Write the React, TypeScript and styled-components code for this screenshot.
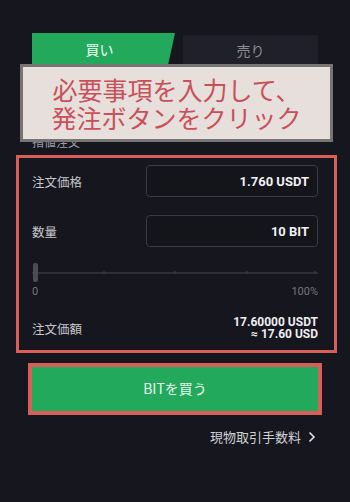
import React from "react";
import styled, { createGlobalStyle } from "styled-components";

const Global = createGlobalStyle`
  html, body { margin: 0; padding: 0; background: #16161e; }
  body { font-family: "Noto Sans CJK JP", "Noto Sans", sans-serif; }
`;

const Page = styled.div`
  position: relative;
  width: 350px;
  height: 502px;
  box-sizing: border-box;
  padding: 33px 32px 0;
  background: #16161e;
  overflow: hidden;
`;

const Tabs = styled.div`
  display: flex;
  gap: 8px;
  height: 32px;
`;

const Tab = styled.div<{ $active?: boolean }>`
  box-sizing: border-box;
  flex: ${(p) => (p.$active ? "0 0 143px" : "1")};
  display: flex;
  align-items: center;
  justify-content: center;
  font-size: 14px;
  color: ${(p) => (p.$active ? "#f2fbf5" : "#8a8b94")};
  background: ${(p) => (p.$active ? "#22a95b" : "#1f2029")};
  clip-path: ${(p) =>
    p.$active ? "polygon(0 0, 100% 0, calc(100% - 7px) 100%, 0 100%)" : "none"};
  margin-top: ${(p) => (p.$active ? "0" : "2px")};
  padding-right: ${(p) => (p.$active ? "8px" : "0")};
`;

const OrderType = styled.div`
  margin-top: 69px;
  font-size: 12px;
  line-height: 16px;
  color: #9a9ba3;
`;

const Annotation = styled.div`
  margin: 5px -19px 0 -16px;
  border: 3px solid #d85e5a;
  padding: 7px 16px 10px 13px;
  display: flex;
  flex-direction: column;
`;

const Row = styled.div<{ $gap?: number }>`
  display: flex;
  align-items: center;
  justify-content: space-between;
  margin-top: ${(p) => p.$gap ?? 0}px;
`;

const Label = styled.span`
  font-size: 12.5px;
  color: #c6c7cd;
`;

const Input = styled.div`
  width: 172px;
  height: 32px;
  box-sizing: border-box;
  border: 1.5px solid #3a3b45;
  border-radius: 4px;
  background: #14141b;
  display: flex;
  align-items: center;
  justify-content: flex-end;
  padding-right: 8px;
  font-family: Roboto, "Liberation Sans", sans-serif;
  font-weight: 700;
  font-size: 13px;
  color: #f1f1f3;
`;

const SliderBox = styled.div`
  margin-top: 16px;
  display: flex;
  flex-direction: column;
`;

const Track = styled.div`
  position: relative;
  height: 19px;
  display: flex;
  align-items: center;
`;

const Line = styled.div`
  flex: 1;
  height: 2px;
  background: #2d2e37;
`;

const Thumb = styled.div`
  position: absolute;
  left: 1px;
  top: 0;
  width: 5px;
  height: 19px;
  border-radius: 2px;
  background: #4b4c54;
`;

const Tick = styled.div`
  position: absolute;
  top: 8px;
  width: 3px;
  height: 3px;
  border-radius: 50%;
  background: #34353e;
  transform: translateX(-50%);
`;

const SliderLabels = styled.div`
  display: flex;
  justify-content: space-between;
  margin-top: 3px;
  font-family: Roboto, "Liberation Sans", sans-serif;
  font-size: 11px;
  line-height: 13px;
  color: #74757e;
`;

const Totals = styled.div`
  display: flex;
  flex-direction: column;
  align-items: flex-end;
  font-family: Roboto, "Liberation Sans", sans-serif;
  font-weight: 700;
  font-size: 12px;
  line-height: 12px;
  color: #eeeef0;
`;

const BuyFrame = styled.div`
  margin: 10px -4px 0;
  border: 4px solid #d85e5a;
`;

const BuyButton = styled.button`
  display: flex;
  width: 100%;
  height: 44px;
  border: none;
  background: #22a95b;
  align-items: center;
  justify-content: center;
  font-family: "Noto Sans CJK JP", "Noto Sans", sans-serif;
  font-size: 14px;
  color: #e9f6ee;
  padding: 0 0 2px;
`;

const FeeLink = styled.div`
  margin-top: 14px;
  display: flex;
  justify-content: flex-end;
  align-items: center;
  gap: 7px;
  padding-right: 2px;
  font-size: 13px;
  line-height: 16px;
  color: #cfd0d5;
`;

const Overlay = styled.div`
  position: absolute;
  left: 20px;
  top: 64px;
  width: 313px;
  height: 78px;
  box-sizing: border-box;
  border: 3px solid #767574;
  background: #e6dfdb;
  display: flex;
  flex-direction: column;
  align-items: center;
  justify-content: center;
  font-family: "Noto Sans CJK JP", sans-serif;
  font-size: 25px;
  line-height: 28px;
  color: #c9505a;
  padding-bottom: 1px;
`;

const OverlayLine = styled.span`
  display: block;
  height: 28px;
  overflow: visible;
`;

export default function App() {
  return (
    <Page>
      <Global />
      <Tabs>
        <Tab $active>買い</Tab>
        <Tab>売り</Tab>
      </Tabs>
      <OrderType>指値注文</OrderType>
      <Annotation>
        <Row>
          <Label>注文価格</Label>
          <Input>1.760 USDT</Input>
        </Row>
        <Row $gap={18}>
          <Label>数量</Label>
          <Input>10 BIT</Input>
        </Row>
        <SliderBox>
          <Track>
            <Line />
            {[25, 50, 75, 99].map((p) => (
              <Tick key={p} style={{ left: `${p}%` }} />
            ))}
            <Thumb />
          </Track>
          <SliderLabels>
            <span>0</span>
            <span>100%</span>
          </SliderLabels>
        </SliderBox>
        <Row $gap={18}>
          <Label>注文価額</Label>
          <Totals>
            <span>17.60000 USDT</span>
            <span>≈ 17.60 USD</span>
          </Totals>
        </Row>
      </Annotation>
      <BuyFrame>
        <BuyButton>BITを買う</BuyButton>
      </BuyFrame>
      <FeeLink>
        <span>現物取引手数料</span>
        <svg width="8" height="12" viewBox="0 0 8 12" fill="none">
          <path d="M1.5 1.5 L6 6 L1.5 10.5" stroke="#e0e1e5" strokeWidth="1.6" />
        </svg>
      </FeeLink>
      <Overlay>
        <OverlayLine>必要事項を入力して、</OverlayLine>
        <OverlayLine>発注ボタンをクリック</OverlayLine>
      </Overlay>
    </Page>
  );
}
